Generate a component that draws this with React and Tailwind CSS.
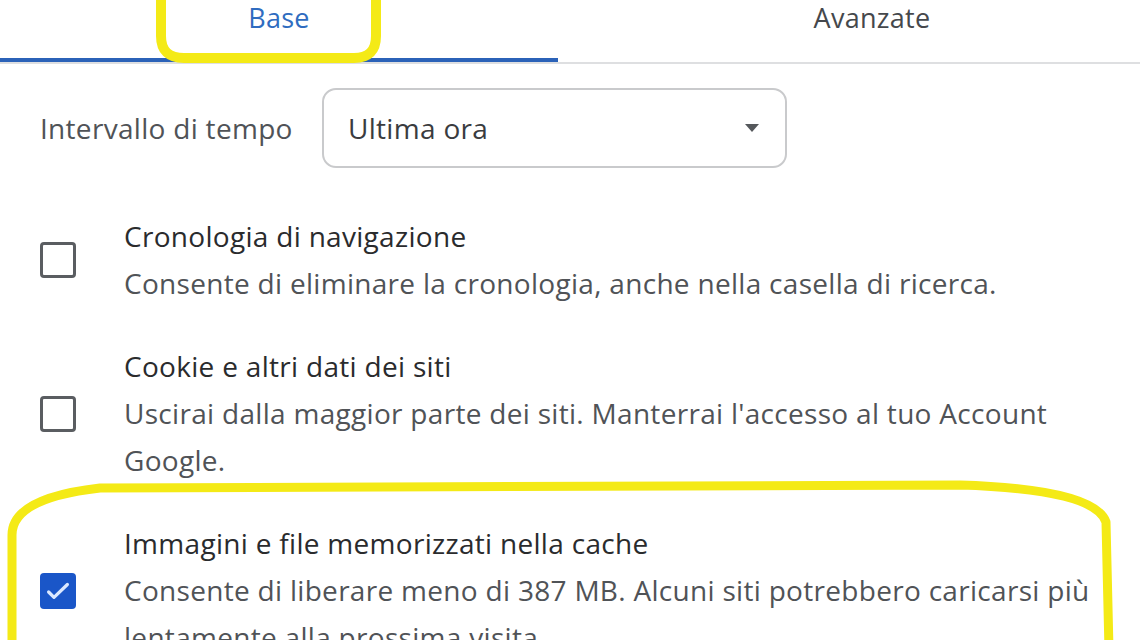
import React from "react";

const items = [
  {
    title: "Cronologia di navigazione",
    desc: "Consente di eliminare la cronologia, anche nella casella di ricerca.",
    checked: false,
  },
  {
    title: "Cookie e altri dati dei siti",
    desc: "Uscirai dalla maggior parte dei siti. Manterrai l'accesso al tuo Account Google.",
    checked: false,
  },
  {
    title: "Immagini e file memorizzati nella cache",
    desc: "Consente di liberare meno di 387 MB. Alcuni siti potrebbero caricarsi più lentamente alla prossima visita.",
    checked: true,
  },
];

const Checkbox = ({ checked }) =>
  checked ? (
    <div className="w-[36px] h-[36px] rounded-[4px] bg-[#1a56c8] flex items-center justify-center shrink-0">
      <svg width="30" height="30" viewBox="0 0 24 24" fill="none">
        <path d="M4.5 12.8l4.3 4.3L19.5 6.8" stroke="#dbe8ff" strokeWidth="2.6" strokeLinecap="round" strokeLinejoin="round" />
      </svg>
    </div>
  ) : (
    <div className="w-[36px] h-[36px] rounded-[4px] border-[3px] border-[#5a5d61] shrink-0" />
  );

export default function App() {
  return (
    <div className="relative w-[1140px] h-[640px] overflow-hidden bg-white font-['Open_Sans',sans-serif] tracking-[0.3px]">
      {/* TABS */}
      <div className="flex h-[64px] border-b-2 border-[#dedfe1]">
        <div className="w-[558px] shrink-0 border-b-4 border-[#2b62b8] text-center text-[27px] leading-[36px] text-[#2f6cc0]">
          Base
        </div>
        <div className="w-[628px] shrink-0 text-center text-[27px] leading-[36px] text-[#45484c]">
          Avanzate
        </div>
      </div>

      {/* TIME RANGE */}
      <div className="flex items-center pl-[40px] mt-[24px]">
        <span className="w-[282px] shrink-0 text-[28px] text-[#505357]">Intervallo di tempo</span>
        <div className="w-[465px] h-[80px] rounded-[14px] border-2 border-[#c9cacc] flex items-center justify-between pl-[24px] pr-[26px]">
          <span className="text-[28px] text-[#3a3c3f]">Ultima ora</span>
          <svg width="14" height="10" viewBox="0 0 14 10">
            <path d="M0 1h14L7 9z" fill="#55585c" />
          </svg>
        </div>
      </div>

      {/* OPTIONS */}
      <div className="flex flex-col gap-[36px] mt-[45px]">
        {items.map((it) => (
          <div key={it.title} className="flex items-center gap-[48px] pl-[40px]">
            <Checkbox checked={it.checked} />
            <div className="w-[985px] text-[28px] leading-[47px]">
              <div className="text-[#2a2b2d]">{it.title}</div>
              <div className="text-[#505357]">{it.desc}</div>
            </div>
          </div>
        ))}
      </div>

      {/* HIGHLIGHTS */}
      <svg className="absolute inset-0 pointer-events-none" width="1140" height="640" viewBox="0 0 1140 640" fill="none">
        <path
          d="M161 -10 L161 36 Q161 58 184 58 L354 58 Q376 58 376 36 L376 -10"
          stroke="#f4ea16"
          strokeWidth="10"
          strokeLinecap="round"
          strokeLinejoin="round"
        />
        <path
          d="M12 650 L12 535 Q12 498 100 488 L960 485 Q1095 489 1106 522 L1109 650"
          stroke="#f4ea16"
          strokeWidth="9"
          strokeLinecap="round"
          strokeLinejoin="round"
        />
      </svg>
    </div>
  );
}
